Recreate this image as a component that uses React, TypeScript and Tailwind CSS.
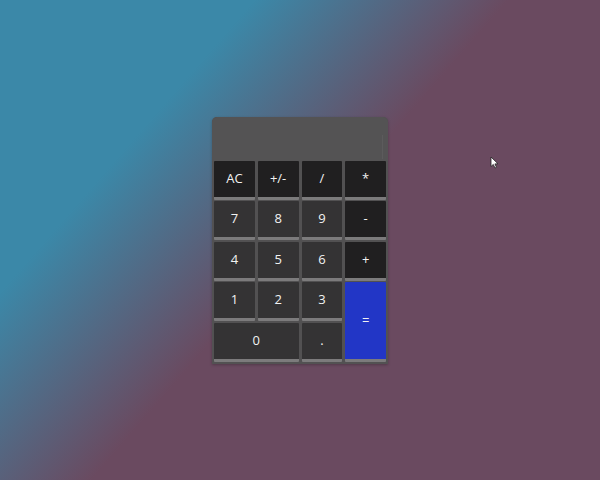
const keys = [
  { label: 'AC', kind: 'op' },
  { label: '+/-', kind: 'op' },
  { label: '/', kind: 'op' },
  { label: '*', kind: 'op' },
  { label: '7', kind: 'num' },
  { label: '8', kind: 'num' },
  { label: '9', kind: 'num' },
  { label: '-', kind: 'op' },
  { label: '4', kind: 'num' },
  { label: '5', kind: 'num' },
  { label: '6', kind: 'num' },
  { label: '+', kind: 'op' },
  { label: '1', kind: 'num' },
  { label: '2', kind: 'num' },
  { label: '3', kind: 'num' },
  { label: '=', kind: 'eq' },
  { label: '0', kind: 'zero' },
  { label: '.', kind: 'num' },
]

function Key({ label, kind }: { label: string; kind: string }) {
  const base =
    'flex items-center justify-center text-[13px] text-[#f2f2f2] border-b-[3px] border-[#7c7b7c] rounded-[1px]'
  if (kind === 'op') return <button className={`${base} bg-[#201f20]`}>{label}</button>
  if (kind === 'eq')
    return <button className={`${base} row-span-2 bg-[#2236c6] text-[12px]`}>{label}</button>
  if (kind === 'zero') return <button className={`${base} col-span-2 bg-[#343334]`}>{label}</button>
  return <button className={`${base} bg-[#343334]`}>{label}</button>
}

export default function App() {
  return (
    <div
      className="relative h-screen w-full flex items-center justify-center bg-[linear-gradient(131deg,#3b88a8_25%,#6a4a60_50%)]"
      style={{ fontFamily: '"Open Sans", "Liberation Sans", sans-serif' }}
    >
      <div className="w-[176px] bg-[#525152] rounded-t-[5px] shadow-[0_1px_3px_rgba(0,0,0,0.25)] overflow-hidden">
        <div className="h-[44px] bg-[#545354] flex justify-end items-end pr-[5px] pb-[2px]">
          <div className="w-px h-[24px] bg-[#5c5b5c]" />
        </div>
        <div className="grid grid-cols-4 grid-rows-[repeat(5,39px)] gap-x-[3px] gap-y-[1.5px] px-[2px] pb-[2px]">
          {keys.map(k => (
            <Key key={k.label} label={k.label} kind={k.kind} />
          ))}
        </div>
      </div>
      <svg className="absolute left-[490px] top-[156px]" width="9" height="13" viewBox="0 0 9 13">
        <path d="M1 1 L1 10.5 L3.3 8.4 L5 12 L6.5 11.3 L4.9 7.9 L8 7.8 Z" fill="#fff" stroke="#222" strokeWidth="0.8" />
      </svg>
    </div>
  )
}
